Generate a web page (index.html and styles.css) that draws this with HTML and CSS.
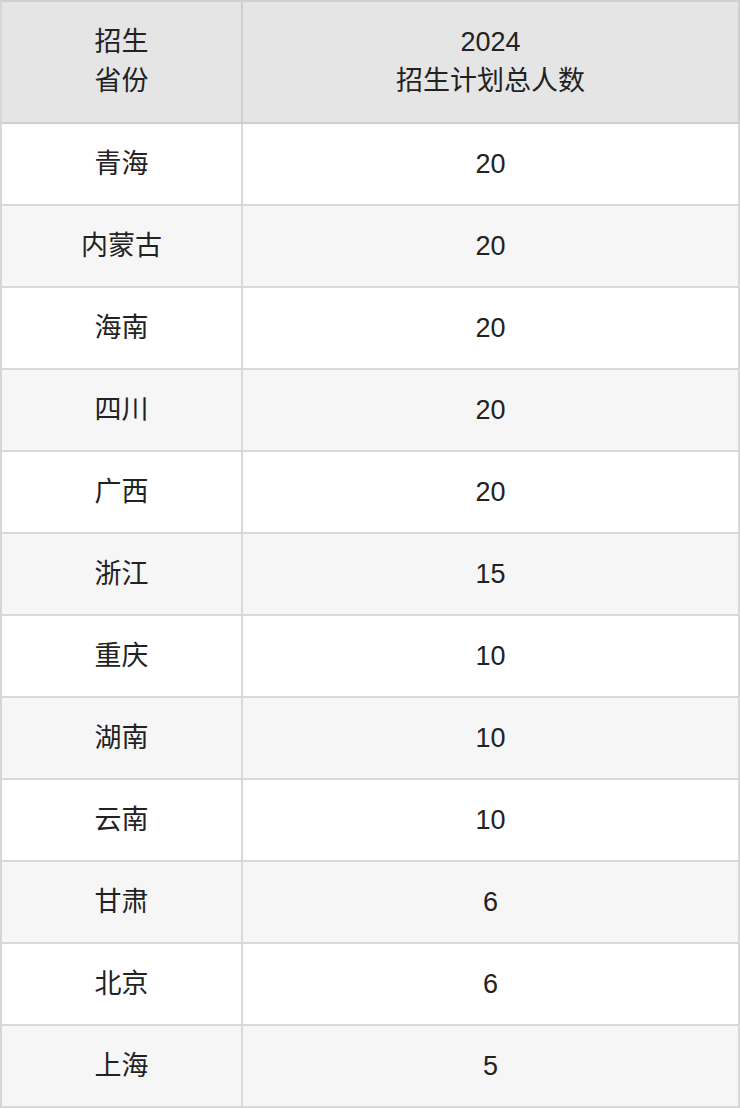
FILE: index.html
```html
<!DOCTYPE html>
<html lang="zh">
<head>
<meta charset="utf-8">
<link rel="stylesheet" href="styles.css">
</head>
<body>
<table class="plan">
  <thead>
    <tr>
      <th class="col-prov">招生<br>省份</th>
      <th class="col-num">2024<br>招生计划总人数</th>
    </tr>
  </thead>
  <tbody>
    <tr><td>青海</td><td>20</td></tr>
    <tr><td>内蒙古</td><td>20</td></tr>
    <tr><td>海南</td><td>20</td></tr>
    <tr><td>四川</td><td>20</td></tr>
    <tr><td>广西</td><td>20</td></tr>
    <tr><td>浙江</td><td>15</td></tr>
    <tr><td>重庆</td><td>10</td></tr>
    <tr><td>湖南</td><td>10</td></tr>
    <tr><td>云南</td><td>10</td></tr>
    <tr><td>甘肃</td><td>6</td></tr>
    <tr><td>北京</td><td>6</td></tr>
    <tr><td>上海</td><td>5</td></tr>
  </tbody>
</table>
</body>
</html>
```

FILE: styles.css
```css
html, body {
  margin: 0;
  padding: 0;
  background: #ffffff;
}

.plan {
  width: 740px;
  border-collapse: separate;
  border-spacing: 0;
  border-top: 2px solid #d0d0d0;
  border-left: 2px solid #d6d6d6;
  font-family: "Liberation Sans", "Noto Sans CJK SC", sans-serif;
  font-size: 27px;
  color: #222222;
  table-layout: fixed;
}

.plan th,
.plan td {
  text-align: center;
  vertical-align: middle;
  border-right: 2px solid #d9d9d9;
  border-bottom: 2px solid #d9d9d9;
  padding: 0;
}

.plan th {
  background: #e5e5e5;
  font-weight: normal;
  height: 120px;
  line-height: 39px;
  border-color: #cfcfcf;
}

.plan .col-prov {
  width: 239px;
}

.plan td {
  height: 80px;
  line-height: 30px;
}

.plan tbody tr:nth-child(odd) td {
  background: #ffffff;
}

.plan tbody tr:nth-child(even) td {
  background: #f6f6f6;
}
```
